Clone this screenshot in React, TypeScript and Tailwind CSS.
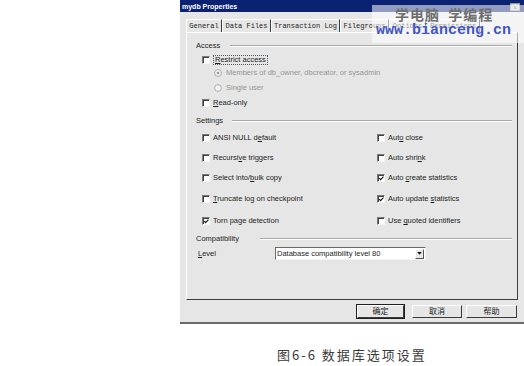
import React from "react";

const U = ({ children }: { children: React.ReactNode }) => <span className="underline underline-offset-[1px]">{children}</span>;

function Check({ checked = false }: { checked?: boolean }) {
  return (
    <span className="relative w-[8px] h-[8px] shrink-0 bg-white border-t border-l border-[#7a7a7a] border-b border-r border-b-[#f4f4f4] border-r-[#f4f4f4] shadow-[inset_1px_1px_0_#404040]">
      {checked && (
        <svg viewBox="0 0 8 8" className="absolute left-0 top-0 w-[7px] h-[7px]">
          <path d="M1.5 3.5 L3 5.2 L6.2 1.8" stroke="#111" strokeWidth="1.3" fill="none" />
        </svg>
      )}
    </span>
  );
}

function Radio({ on = false }: { on?: boolean }) {
  return (
    <svg viewBox="0 0 8 8" className="w-[8px] h-[8px] shrink-0">
      <circle cx="4" cy="4" r="3.4" fill="#f4f4f4" stroke="#9a9a9a" strokeWidth="0.8" />
      {on && <circle cx="4" cy="4" r="1.3" fill="#9a9a9a" />}
    </svg>
  );
}

function CheckRow({ checked, children }: { checked?: boolean; children: React.ReactNode }) {
  return (
    <div className="flex items-center gap-[3px] h-[12px]">
      <Check checked={checked} />
      <span className="text-[#1c1c1c]">{children}</span>
    </div>
  );
}

function Group({ label, w }: { label: string; w: string }) {
  return (
    <div className="flex items-center h-[12px] pl-[9px] pr-[5px]">
      <span className={`${w} shrink-0 text-[#1c1c1c]`}>{label}</span>
      <div className="flex-1 h-[2px] border-t border-[#a8a8a8] border-b border-b-white" />
    </div>
  );
}

function Btn({ w, children, def = false }: { w: string; children: React.ReactNode; def?: boolean }) {
  return (
    <div
      className={`${w} h-[13px] flex items-center justify-center text-[8px] text-[#1c1c1c] bg-[#e6e6e6] border-t border-l border-white border-r border-b border-r-[#3a3a3a] border-b-[#3a3a3a] ${def ? "outline outline-1 outline-[#202020]" : ""}`}
      style={{ fontFamily: '"Noto Sans CJK SC", sans-serif' }}
    >
      {children}
    </div>
  );
}

export default function App() {
  const tabs: [string, string][] = [
    ["General", "w-[36px]"],
    ["Data Files", "w-[49px]"],
    ["Transaction Log", "w-[69px]"],
    ["Filegroups", "w-[49px]"],
    ["Options", "w-[37px]"],
    ["Permissions", "w-[54px]"],
  ];
  return (
    <div className="relative w-[524px] h-[366px] bg-white overflow-hidden font-['Liberation_Sans',sans-serif] text-[7.5px] leading-none">
      <div className="ml-[180px] w-[344px] h-[324px] flex flex-col bg-[#e6e6e6] border-b-2 border-[#6a6a6a]">
        {/* title bar */}
        <div className="relative h-[12px] bg-[#0b2272] flex items-center pl-[2px] text-white font-bold text-[7px]">
          mydb Properties
          <div className="absolute right-[4px] top-[3px] w-[10px] h-[8px] bg-[#d8d8d8] border border-[#9a9a9a] flex items-center justify-center text-[#555] text-[7px] font-normal">
            ×
          </div>
        </div>
        {/* tabs */}
        <div className="h-[20px] flex items-end pl-[6px] font-['Liberation_Mono',monospace] text-[7px] text-[#1c1c1c]">
          {tabs.map(([t, w]) => (
            <div
              key={t}
              className={`${w} h-[13px] flex items-center justify-center border-l border-t border-white border-r border-r-[#3a3a3a]`}
            >
              {t}
            </div>
          ))}
        </div>
        {/* panel */}
        <div className="ml-[6px] w-[332px] h-[268px] border-t border-l border-white border-r border-b border-r-[#3c3c3c] border-b-[#3c3c3c] pt-[7px] flex flex-col">
          <Group label="Access" w="w-[34px]" />
          <div className="mt-[2px] pl-[15px]">
            <div className="flex items-center gap-[3px] h-[12px]">
              <Check />
              <span className="text-[#1c1c1c] border border-dotted border-[#555] px-[1px] leading-[8px]">
                <U>R</U>estrict access
              </span>
            </div>
          </div>
          <div className="mt-[1px] pl-[27px] flex items-center gap-[4px] h-[12px] text-[#949494]">
            <Radio on />
            <span>Members of db_owner, dbcreator, or sysadmin</span>
          </div>
          <div className="mt-[3px] pl-[27px] flex items-center gap-[4px] h-[12px] text-[#949494]">
            <Radio />
            <span>Single user</span>
          </div>
          <div className="mt-[3px] pl-[15px]">
            <CheckRow>
              <U>R</U>ead-only
            </CheckRow>
          </div>
          <div className="mt-[6px]">
            <Group label="Settings" w="w-[36px]" />
          </div>
          <div className="mt-[5px] pl-[15px] grid grid-cols-[175px_1fr] gap-y-[8px]">
            <CheckRow>
              ANSI NULL d<U>e</U>fault
            </CheckRow>
            <CheckRow>
              Aut<U>o</U> close
            </CheckRow>
            <CheckRow>
              Recursi<U>v</U>e triggers
            </CheckRow>
            <CheckRow>
              Auto shri<U>n</U>k
            </CheckRow>
            <div>
              <CheckRow>
                Select into/<U>b</U>ulk copy
              </CheckRow>
            </div>
            <div>
              <CheckRow checked>
                Auto <U>c</U>reate statistics
              </CheckRow>
            </div>
            <div className="mt-[1px]">
              <CheckRow>
                <U>T</U>runcate log on checkpoint
              </CheckRow>
            </div>
            <div className="mt-[1px]">
              <CheckRow checked>
                Auto update <U>s</U>tatistics
              </CheckRow>
            </div>
            <div className="mt-[2px]">
              <CheckRow checked>Torn page detection</CheckRow>
            </div>
            <div className="mt-[2px]">
              <CheckRow>
                Use <U>q</U>uoted identifiers
              </CheckRow>
            </div>
          </div>
          <div className="mt-[6px]">
            <Group label="Compatibility" w="w-[64px]" />
          </div>
          <div className="mt-[2px] flex items-center h-[13px] pl-[11px]">
            <span className="w-[77px] text-[#1c1c1c]">
              <U>L</U>evel
            </span>
            <div className="w-[151px] h-[13px] bg-white border-t border-l border-[#6a6a6a] border-b border-r border-b-[#f4f4f4] border-r-[#f4f4f4] flex items-center justify-between">
              <span className="pl-[1px] text-[#1c1c1c]">Database compatibility level 80</span>
              <div className="w-[9px] h-[10px] mr-[1px] bg-[#e6e6e6] border-t border-l border-white border-r border-b border-r-[#555] border-b-[#555] flex items-center justify-center">
                <svg viewBox="0 0 6 4" className="w-[5px] h-[3px]">
                  <path d="M0 0 H6 L3 3.5 Z" fill="#111" />
                </svg>
              </div>
            </div>
          </div>
        </div>
        {/* buttons */}
        <div className="flex items-center h-[22px] pl-[177px]">
          <Btn w="w-[47px]" def>
            确定
          </Btn>
          <div className="w-[8px]" />
          <Btn w="w-[50px]">取消</Btn>
          <div className="w-[4px]" />
          <Btn w="w-[51px]">帮助</Btn>
        </div>
      </div>
      {/* caption */}
      <div
        className="mt-[24px] pl-[277px] text-[13px] tracking-[2px] text-[#3a3a3a] leading-[14px]"
        style={{ fontFamily: '"Noto Sans CJK SC", sans-serif' }}
      >
        图6-6 数据库选项设置
      </div>
      {/* watermark overlay */}
      <div className="absolute left-[372px] top-[5px] w-[152px] h-[38px] bg-white/55">
        <div
          className="absolute left-[23px] top-[1px] text-[14px] font-bold text-[#6e6e6e] leading-[16px] tracking-[1px]"
          style={{ fontFamily: '"Noto Sans CJK SC", sans-serif' }}
        >
          学电脑&nbsp;&nbsp;学编程
        </div>
        <div className="absolute left-[4px] top-[18px] font-['Liberation_Mono',monospace] font-bold text-[15px] leading-[16px] text-[#4256c4]">
          www.bianceng.cn
        </div>
      </div>
    </div>
  );
}
